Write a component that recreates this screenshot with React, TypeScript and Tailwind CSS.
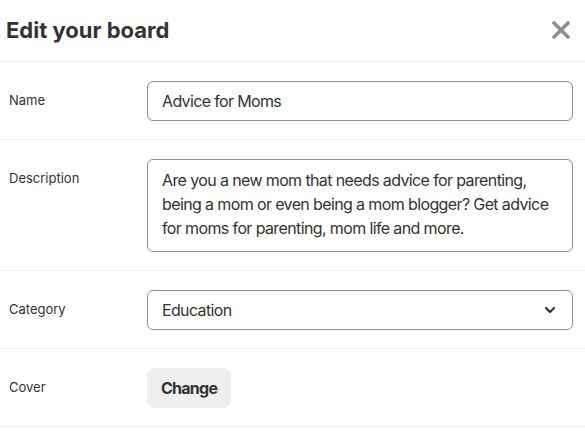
import { ChevronDown } from "lucide-react";

const font = { fontFamily: "Inter, 'Noto Sans', Arial, sans-serif" };

function Row({ label, children }: { label: string; children: React.ReactNode }) {
  return (
    <div className="flex items-start border-b border-[#efefef] pt-[19px] pb-[18px] pl-[9px] pr-[12px]">
      <div className="flex h-10 w-[138px] shrink-0 items-center text-[13px] text-[#333]">{label}</div>
      <div className="flex-1">{children}</div>
    </div>
  );
}

export default function App() {
  return (
    <div className="w-[585px] bg-white text-[#333]" style={font}>
      <div className="flex h-[62px] items-center justify-between border-b border-[#efefef] pl-[6px] pr-[15px]">
        <h1 className="text-[22px] font-bold text-[#333]">Edit your board</h1>
        <svg width="18" height="18" viewBox="0 0 18 18" className="mb-[2px]">
          <path d="M2 2 L16 16 M16 2 L2 16" stroke="#8e8e8e" strokeWidth="3.6" strokeLinecap="round" />
        </svg>
      </div>

      <Row label="Name">
        <div className="flex h-10 items-center rounded-md border border-[#8e8e8e] px-[14px] text-[16px] tracking-[-0.65px]">
          Advice for Moms
        </div>
      </Row>

      <Row label="Description">
        <div className="h-[93px] rounded-md border border-[#8e8e8e] px-[14px] pt-[8px] pb-[10px] text-[16px] leading-6 tracking-[-0.62px]">
          Are you a new mom that needs advice for parenting, being a mom or even being a mom blogger? Get advice for moms for parenting, mom life and more.
        </div>
      </Row>

      <Row label="Category">
        <div className="flex h-10 items-center justify-between rounded-md border border-[#8e8e8e] pl-[14px] pr-[14px] text-[16px] tracking-[-0.65px]">
          <span>Education</span>
          <ChevronDown size={16} strokeWidth={3.2} className="text-[#333]" />
        </div>
      </Row>

      <Row label="Cover">
        <button className="h-10 rounded-lg bg-[#efefef] px-[14px] text-[16px] font-bold tracking-[-0.75px] text-[#333]">Change</button>
      </Row>
    </div>
  );
}
